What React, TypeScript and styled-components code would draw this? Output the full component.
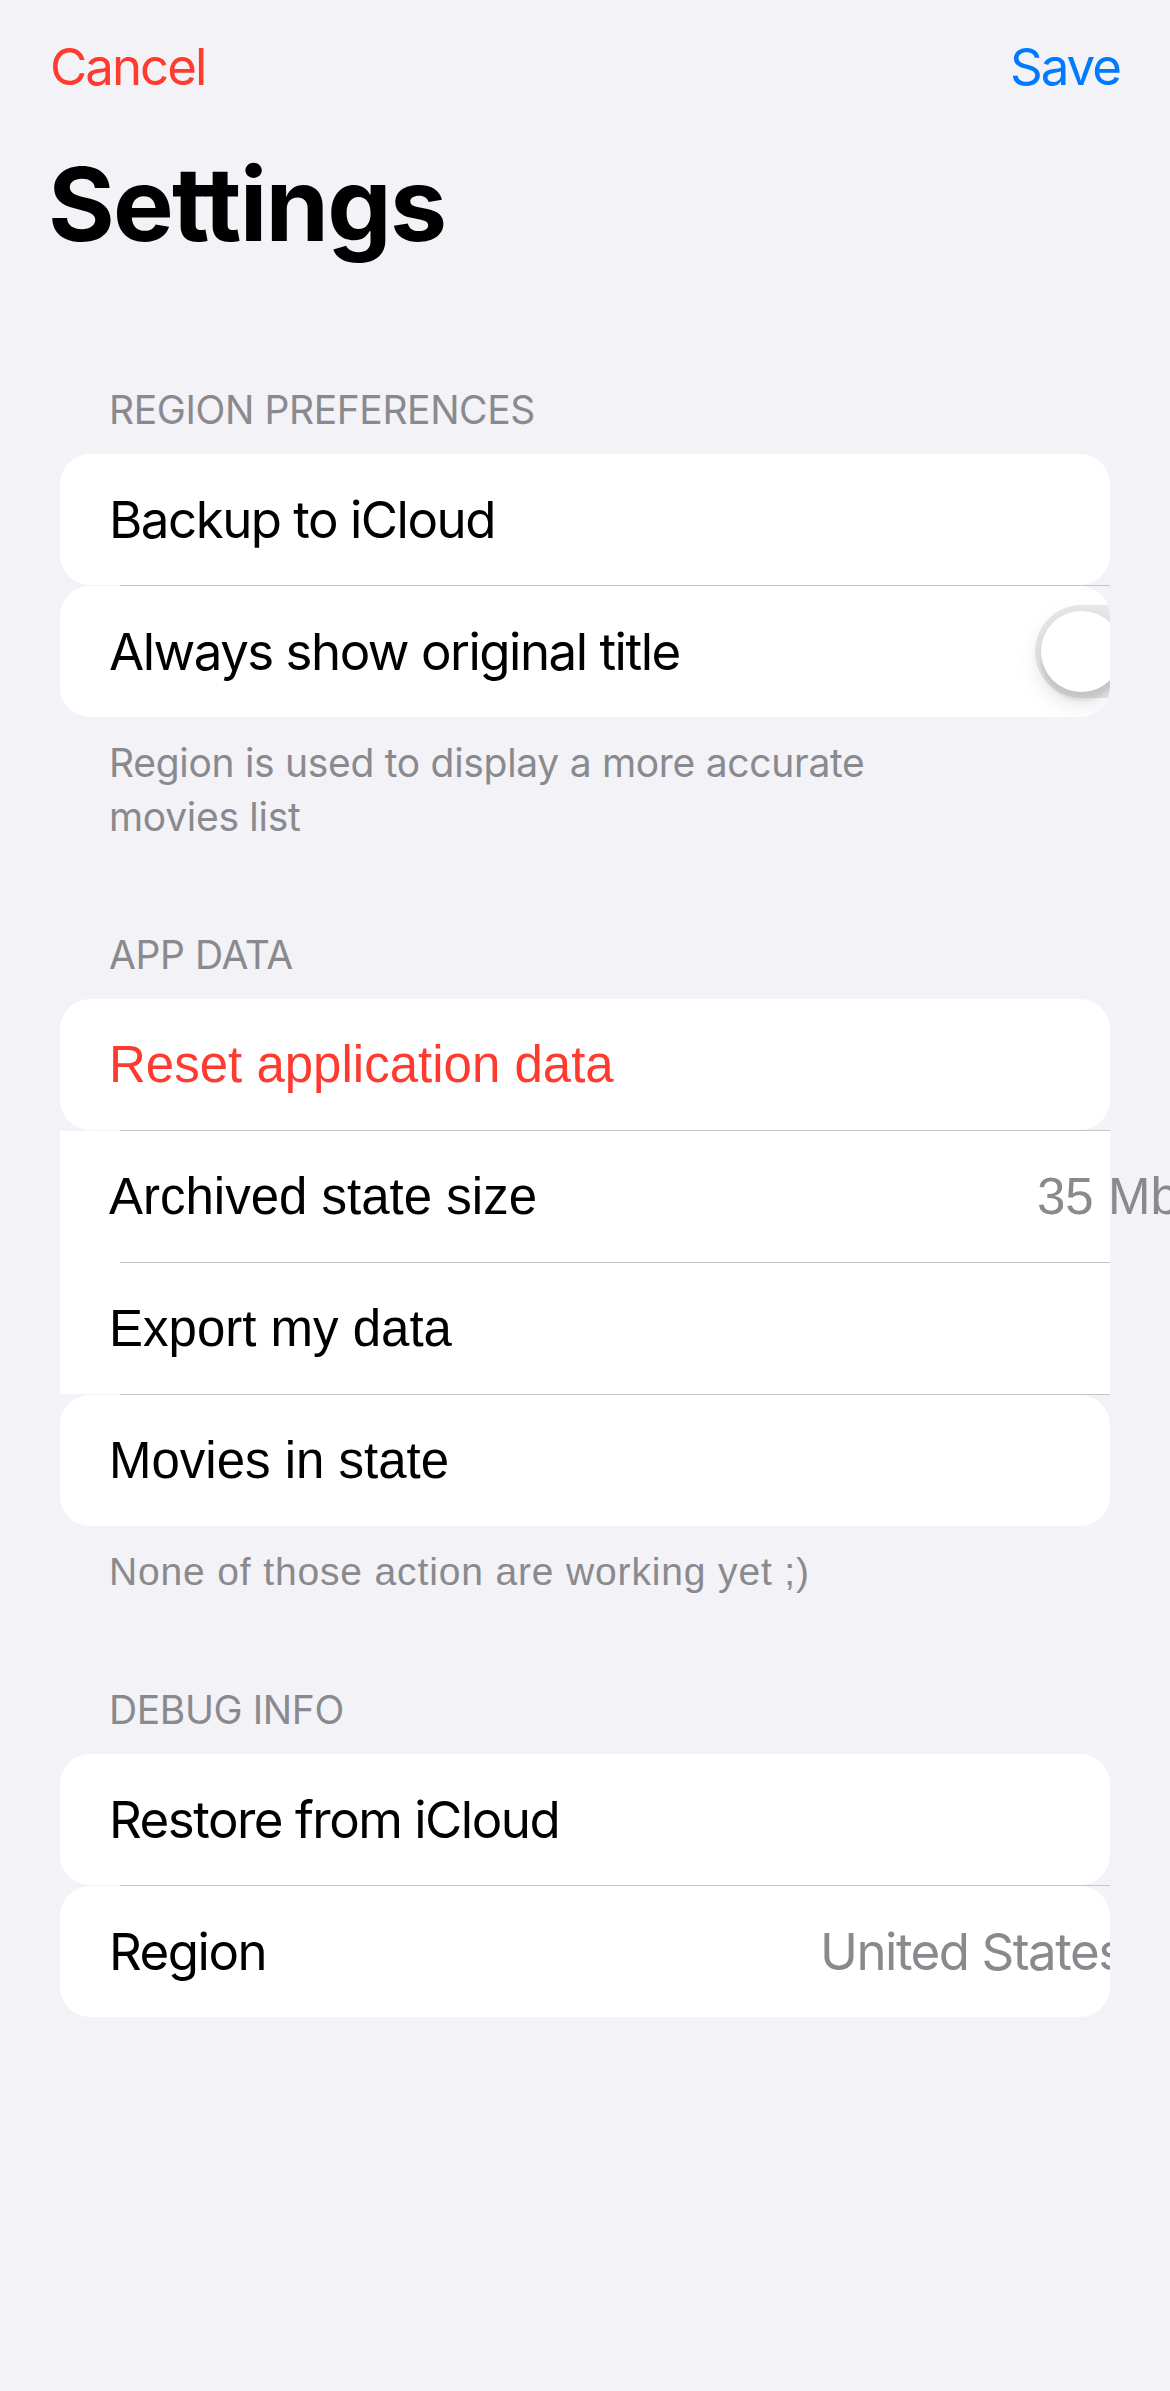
import React from "react";
import styled, { createGlobalStyle } from "styled-components";

const GlobalStyle = createGlobalStyle`
  html, body {
    margin: 0;
    padding: 0;
    background: #f2f2f7;
    overflow-x: hidden;
  }
  body {
    font-family: Inter, "Noto Sans", sans-serif;
    -webkit-font-smoothing: antialiased;
  }
`;

const SF = `Inter, "Noto Sans", sans-serif`;
const HELV = `"Liberation Sans", Arial, sans-serif`;

const Page = styled.div`
  width: 1170px;
  min-height: 2391px;
  background: #f2f2f7;
  overflow: hidden;
`;

const NavBar = styled.header`
  height: 134px;
  padding: 0 50px;
  display: flex;
  align-items: center;
  justify-content: space-between;
`;

const NavButton = styled.button<{ $color: string }>`
  border: 0;
  background: none;
  padding: 0;
  font-family: ${SF};
  font-size: 51px;
  line-height: 62px;
  color: ${(p) => p.$color};
  letter-spacing: -2px;
`;

const Title = styled.h1`
  margin: 8px 0 0 0;
  padding-left: 48px;
  font-family: ${SF};
  font-weight: 700;
  font-size: 102px;
  line-height: 124px;
  letter-spacing: -1.75px;
  color: #000;
`;

const Section = styled.section<{ $top: number }>`
  margin-top: ${(p) => p.$top}px;
  padding: 0 60px;
`;

const SectionHeader = styled.h2`
  margin: 0 0 21px 0;
  padding-left: 49px;
  font-family: ${SF};
  font-weight: 400;
  font-size: 39px;
  line-height: 47px;
  color: #8a8a8e;
  letter-spacing: -0.4px;
`;

const Card = styled.div`
  display: flex;
  flex-direction: column;
`;

const Row = styled.div<{ $rounded: boolean }>`
  height: 131px;
  display: flex;
  align-items: center;
  padding-left: 49px;
  background: #fff;
  border-radius: ${(p) => (p.$rounded ? "30px" : "0")};
  overflow: ${(p) => (p.$rounded ? "hidden" : "visible")};
`;

const Label = styled.span<{ $danger?: boolean; $helv?: boolean }>`
  flex: 1;
  min-width: 0;
  white-space: nowrap;
  font-family: ${(p) => (p.$helv ? HELV : SF)};
  font-size: 51px;
  line-height: 62px;
  letter-spacing: ${(p) => (p.$helv ? "0" : "-1.5px")};
  color: ${(p) => (p.$danger ? "#ff3b30" : "#000")};
`;

const Trailing = styled.div<{ $width: number; $overhang: number }>`
  flex-shrink: 0;
  width: ${(p) => p.$width}px;
  margin-right: -${(p) => p.$overhang}px;
  display: flex;
  align-items: center;
`;

const Value = styled.span<{ $helv?: boolean }>`
  white-space: nowrap;
  font-family: ${(p) => (p.$helv ? HELV : SF)};
  font-size: 51px;
  line-height: 62px;
  letter-spacing: ${(p) => (p.$helv ? "0" : "-1.5px")};
  color: #8a8a8e;
`;

const SwitchTrack = styled.div<{ $on: boolean }>`
  width: 153px;
  height: 93px;
  border-radius: 46.5px;
  background: ${(p) => (p.$on ? "#34c759" : "#e9e9ea")};
  display: flex;
  align-items: center;
  justify-content: ${(p) => (p.$on ? "flex-end" : "flex-start")};
  padding: 0 6px;
  box-sizing: border-box;
`;

const SwitchKnob = styled.div`
  width: 81px;
  height: 81px;
  border-radius: 50%;
  background: #fff;
  box-shadow: 0 9px 24px rgba(0, 0, 0, 0.15), 0 9px 3px rgba(0, 0, 0, 0.06);
`;

const SeparatorTrack = styled.div<{ $fill: boolean }>`
  height: 1px;
  background: ${(p) => (p.$fill ? "#fff" : "transparent")};
  display: flex;
`;

const SeparatorLine = styled.div`
  flex: 1;
  margin-left: 60px;
  background: #c6c6c8;
`;

const Footer = styled.p<{ $helv?: boolean }>`
  margin: 19px 0 0 0;
  padding-left: 49px;
  max-width: 800px;
  font-family: ${(p) => (p.$helv ? HELV : SF)};
  font-size: 39px;
  line-height: 54px;
  letter-spacing: ${(p) => (p.$helv ? "0.85px" : "-0.3px")};
  color: #8a8a8e;
`;

type RowSpec = {
  label: string;
  rounded: boolean;
  danger?: boolean;
  helv?: boolean;
  trailing?: React.ReactNode;
  trailingWidth?: number;
  overhang?: number;
};

type SectionSpec = {
  title: string;
  top: number;
  rows: RowSpec[];
  footer?: string;
  footerHelv?: boolean;
};

const Switch = ({ on }: { on: boolean }) => (
  <SwitchTrack $on={on}>
    <SwitchKnob />
  </SwitchTrack>
);

const sections: SectionSpec[] = [
  {
    title: "REGION PREFERENCES",
    top: 120,
    rows: [
      { label: "Backup to iCloud", rounded: true },
      {
        label: "Always show original title",
        rounded: true,
        trailing: <Switch on={false} />,
        trailingWidth: 153,
        overhang: 78,
      },
    ],
    footer: "Region is used to display a more accurate movies list",
  },
  {
    title: "APP DATA",
    top: 87,
    rows: [
      { label: "Reset application data", rounded: true, danger: true, helv: true },
      {
        label: "Archived state size",
        rounded: false,
        helv: true,
        trailing: <Value $helv>35 Mb</Value>,
        trailingWidth: 200,
        overhang: 127,
      },
      { label: "Export my data", rounded: false, helv: true },
      { label: "Movies in state", rounded: true, helv: true },
    ],
    footer: "None of those action are working yet ;)",
    footerHelv: true,
  },
  {
    title: "DEBUG INFO",
    top: 87,
    rows: [
      { label: "Restore from iCloud", rounded: true },
      {
        label: "Region",
        rounded: true,
        trailing: <Value>United States</Value>,
        trailingWidth: 360,
        overhang: 70,
      },
    ],
  },
];

export default function App() {
  return (
    <Page>
      <GlobalStyle />
      <NavBar>
        <NavButton $color="#ff3b30">Cancel</NavButton>
        <NavButton $color="#007aff">Save</NavButton>
      </NavBar>
      <Title>Settings</Title>
      {sections.map((s) => (
        <Section key={s.title} $top={s.top}>
          <SectionHeader>{s.title}</SectionHeader>
          <Card>
            {s.rows.map((r, i) => (
              <React.Fragment key={r.label}>
                {i > 0 && (
                  <SeparatorTrack $fill={!r.rounded && !s.rows[i - 1].rounded}>
                    <SeparatorLine />
                  </SeparatorTrack>
                )}
                <Row $rounded={r.rounded}>
                  <Label $danger={r.danger} $helv={r.helv}>
                    {r.label}
                  </Label>
                  {r.trailing && (
                    <Trailing $width={r.trailingWidth ?? 0} $overhang={r.overhang ?? 0}>
                      {r.trailing}
                    </Trailing>
                  )}
                </Row>
              </React.Fragment>
            ))}
          </Card>
          {s.footer && <Footer $helv={s.footerHelv}>{s.footer}</Footer>}
        </Section>
      ))}
    </Page>
  );
}
